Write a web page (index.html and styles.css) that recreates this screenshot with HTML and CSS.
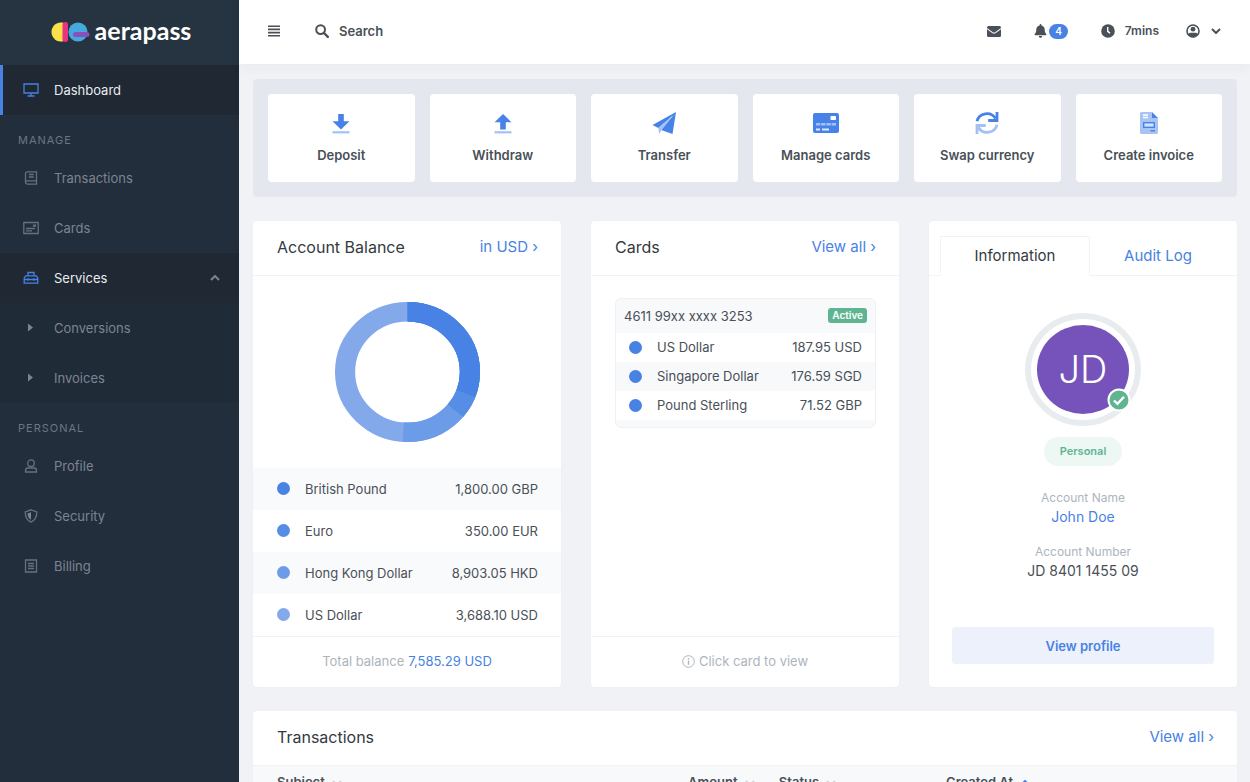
FILE: index.html
```html
<!DOCTYPE html>
<html lang="en">
<head>
  <meta charset="utf-8">
  <meta name="viewport" content="width=device-width, initial-scale=1.0">
  <title>Dashboard - aerapass</title>
  <link rel="stylesheet" href="styles.css">
</head>

<body>
  <div class="app">
    <aside class="sidebar">
      <a class="brand" href="#">
        <svg class="brand-mark" width="42" height="20" viewBox="0 0 42 20">
          <path d="M15 .6A9.6 9.6 0 1 0 15 19.4z" fill="#fbdf4b"/>
          <circle cx="30" cy="10" r="9.600" fill="#45a9e0"/>
          <rect x="14.500" y="0" width="5.500" height="20" rx="2.700" fill="#e8337f"/>
          <rect x="25" y="10" width="16.500" height="5" rx="2.500" fill="#8a4fb8"/>
        </svg>
        <span>aerapass</span>
      </a>
      <nav class="menu">
        <a class="menu-item current" href="#">
          <svg class="menu-icon" width="16" height="14" viewBox="0 0 16 14"><path d="M1 1h14v9H1zM8 10v3M4.500 13h7"/></svg>
          <span>Dashboard</span>
        </a>

        <h2 class="menu-title">Manage</h2>
        <a class="menu-item" href="#">
          <svg class="menu-icon" width="16" height="14" viewBox="0 0 16 14"><path d="M4.500.8h9v12.400h-9a2 2 0 0 1-2-2V2.800a2 2 0 0 1 2-2zM2.500 11.200c0-1 .8-1.400 2-1.400h9M5.800 3.500h5M5.800 6h5"/></svg>
          <span>Transactions</span>
        </a>
        <a class="menu-item" href="#">
          <svg class="menu-icon" width="16" height="14" viewBox="0 0 16 14"><path d="M.8 1.500h14.400v11H.8zM10.500 4.200h2v1h-2zM3 7.500h9M3 9.800h6"/></svg>
          <span>Cards</span>
        </a>
        <a class="menu-item open" href="#">
          <svg class="menu-icon" width="16" height="14" viewBox="0 0 16 14"><path d="M1.200 12.200v-5l1.500-2.400h10.600l1.500 2.400v5zM5 4.800V1.500h6v3.300M1.200 8.500h13.600M5 7.300v2.400M11 7.300v2.400"/></svg>
          <span>Services</span>
          <svg class="menu-caret" width="10" height="6" viewBox="0 0 10 6"><path d="M1 5l4-4 4 4"/></svg>
        </a>
        <div class="submenu">
          <a class="menu-item" href="#">
            <svg class="menu-icon menu-arrow" width="16" height="14" viewBox="0 0 16 14"><path d="M5 2.500v8L10 6.500z"/></svg>
            <span>Conversions</span>
          </a>
          <a class="menu-item" href="#">
            <svg class="menu-icon menu-arrow" width="16" height="14" viewBox="0 0 16 14"><path d="M5 2.500v8L10 6.500z"/></svg>
            <span>Invoices</span>
          </a>
        </div>

        <h2 class="menu-title">Personal</h2>
        <a class="menu-item" href="#">
          <svg class="menu-icon" width="16" height="14" viewBox="0 0 16 14"><circle cx="8" cy="4.200" r="3.300"/><path d="M2.500 13v-1.600a2.400 2.400 0 0 1 2.400-2.400h6.200a2.400 2.400 0 0 1 2.400 2.400V13z"/></svg>
          <span>Profile</span>
        </a>
        <a class="menu-item" href="#">
          <svg class="menu-icon" width="16" height="14" viewBox="0 0 16 14"><path d="M8 .8l5.800 2.100c0 4.800-2 8.300-5.800 10.300C4.200 11.200 2.200 7.700 2.200 2.900z"/><path class="solid" d="M8 3.200v7.600C5.800 9.500 4.700 7.300 4.500 4.500z"/></svg>
          <span>Security</span>
        </a>
        <a class="menu-item" href="#">
          <svg class="menu-icon" width="16" height="14" viewBox="0 0 16 14"><path d="M2.500 1h11v12h-11zM5 4.500h6M5 7h6M5 9.500h6"/></svg>
          <span>Billing</span>
        </a>
      </nav>
    </aside>

    <div class="page">
      <header class="topbar">
        <button class="icon-button" aria-label="Toggle menu">
          <svg width="14" height="12" viewBox="0 0 14 12"><path d="M1 1.200h12M1 4.400h12M1 7.600h12M1 10.800h12" stroke="currentColor" stroke-width="1.600"/></svg>
        </button>
        <label class="search">
          <svg width="14" height="14" viewBox="0 0 14 14" fill="none" stroke="currentColor"><circle cx="5.600" cy="5.600" r="4.400" stroke-width="2"/><path d="M9 9l3.800 3.800" stroke-width="2.400" stroke-linecap="round"/></svg>
          <input type="text" placeholder="Search" aria-label="Search">
        </label>
        <div class="topbar-right">
          <button class="icon-button" aria-label="Messages">
            <svg width="14" height="11" viewBox="0 0 14 11"><rect width="14" height="11" rx="1.500" fill="currentColor"/><path d="M0 2.600l5.500 4q1.500 1 3 0l5.500-4" fill="none" stroke="#fff" stroke-width="1.100"/></svg>
          </button>
          <button class="icon-button notify" aria-label="Notifications">
            <svg width="13" height="14" viewBox="0 0 13 14" fill="currentColor"><path d="M6.500 0c.6 0 .9.400.9.900v.5c2 .4 3.300 2 3.300 4 0 2.600.7 3.500 1.500 4.300.5.600.2 1.500-.6 1.500H1.400c-.8 0-1.100-.9-.6-1.500.8-.8 1.500-1.700 1.500-4.300 0-2 1.300-3.600 3.300-4V.9c0-.5.300-.9.900-.9zM4.800 12h3.400c0 1.100-.7 1.800-1.700 1.800s-1.700-.7-1.700-1.800z"/></svg>
            <span class="count">4</span>
          </button>
          <button class="icon-button timer">
            <svg width="14" height="14" viewBox="0 0 14 14"><circle cx="7" cy="7" r="6.800" fill="currentColor"/><path d="M6.700 3v4.300l2.300 1.800" fill="none" stroke="#fff" stroke-width="1.400"/></svg>
            7mins
          </button>
          <button class="icon-button account" aria-label="Account">
            <svg width="14" height="14" viewBox="0 0 14 14"><circle cx="7" cy="7" r="6" fill="none" stroke="currentColor" stroke-width="1.600"/><circle cx="7" cy="5.200" r="2.400" fill="currentColor"/><path d="M2 10.500C2.600 9 4 8.700 5 8.700h4c1 0 2.400.3 3 1.800-1.200 1.900-3 2.800-5 2.800s-3.800-.9-5-2.800z" fill="currentColor"/></svg>
            <svg width="10" height="6" viewBox="0 0 10 6"><path d="M1 1l4 4 4-4" fill="none" stroke="currentColor" stroke-width="2"/></svg>
          </button>
        </div>
      </header>

      <main class="content">
        <section class="actions">
          <a class="action" href="#">
            <svg width="26" height="24" viewBox="0 0 26 24"><path d="M10.200 3h5.600v7.200H21.500L13 18.500 4.500 10.200h5.700z" fill="#4782e8"/><path d="M4.500 20.200h17v2.200h-17z" fill="#a3c1f5"/></svg>
            Deposit
          </a>
          <a class="action" href="#">
            <svg width="26" height="24" viewBox="0 0 26 24"><path d="M10.200 18.500h5.600v-7.200H21.500L13 3 4.500 11.300h5.700z" fill="#4782e8"/><path d="M4.500 20.200h17v2.200h-17z" fill="#a3c1f5"/></svg>
            Withdraw
          </a>
          <a class="action" href="#">
            <svg width="26" height="24" viewBox="0 0 26 24"><path d="M25 1L1.500 14l5.800 3L22.500 4 10.200 19l11.300 4z" fill="#4782e8"/><path d="M7.300 17L22.500 4 10.500 19 8.200 23z" fill="#a3c1f5"/></svg>
            Transfer
          </a>
          <a class="action" href="#">
            <svg width="26" height="24" viewBox="0 0 26 24"><rect y="2" width="26" height="20" rx="2" fill="#4782e8"/><rect x="17.500" y="5" width="5.500" height="4" rx=".8" fill="#fff"/><path d="M3 13.300h20" stroke="#a3c1f5" stroke-width="2.600" stroke-dasharray="4.400 .8"/><path d="M3 18.500h4M9 18.500h7" stroke="#dbe7fc" stroke-width="1.800"/></svg>
            Manage cards
          </a>
          <a class="action" href="#">
            <svg width="26" height="24" viewBox="0 0 26 24" fill="none" stroke-width="2.800"><path d="M3 10.200A10 9.500 0 0 1 21.500 7.500M23 1v8.500h-8.800" stroke="#4782e8"/><path d="M23 13.800A10 9.500 0 0 1 4.500 16.500M3 23v-8.500h8.800" stroke="#a3c1f5"/></svg>
            Swap currency
          </a>
          <a class="action" href="#">
            <svg width="26" height="24" viewBox="0 0 26 24"><path d="M5.500 1H16v6h6v14.500a1.500 1.500 0 0 1-1.500 1.500h-15A1.500 1.500 0 0 1 4 21.500v-19A1.500 1.500 0 0 1 5.500 1z" fill="#a8c4f4"/><path d="M16 1l6 6h-6z" fill="#4782e8"/><path d="M7 4h5M7 6.500h5" stroke="#fff" stroke-width="1.400"/><rect x="7.700" y="11.700" width="10.600" height="4.600" fill="#d3e1fb" stroke="#4782e8" stroke-width="1.400"/><path d="M14.500 19.800h4.500" stroke="#4782e8" stroke-width="1.400"/></svg>
            Create invoice
          </a>
        </section>

        <section class="panels">
          <article class="panel">
            <header class="panel-head">
              <h3>Account Balance</h3>
              <a href="#">in USD ›</a>
            </header>
            <div class="chart">
              <svg width="145" height="140" viewBox="0 0 144 144" preserveAspectRatio="none">
                <g transform="rotate(-90 72 72)" fill="none" stroke-width="20">
                  <circle cx="72" cy="72" r="62" pathLength="1000" stroke="#83a9ea"/>
                  <circle cx="72" cy="72" r="62" pathLength="1000" stroke="#6c9ce8" stroke-dasharray="511 489"/>
                  <circle cx="72" cy="72" r="62" pathLength="1000" stroke="#568de5" stroke-dasharray="361 639"/>
                  <circle cx="72" cy="72" r="62" pathLength="1000" stroke="#4782e4" stroke-dasharray="308 692"/>
                </g>
              </svg>
            </div>
            <table class="balances">
              <tr><td><i class="dot gbp"></i></td><td>British Pound</td><td>1,800.00 GBP</td></tr>
              <tr><td><i class="dot eur"></i></td><td>Euro</td><td>350.00 EUR</td></tr>
              <tr><td><i class="dot hkd"></i></td><td>Hong Kong Dollar</td><td>8,903.05 HKD</td></tr>
              <tr><td><i class="dot usd"></i></td><td>US Dollar</td><td>3,688.10 USD</td></tr>
            </table>
            <footer class="panel-foot">Total balance <a href="#">7,585.29 USD</a></footer>
          </article>

          <article class="panel">
            <header class="panel-head">
              <h3>Cards</h3>
              <a href="#">View all ›</a>
            </header>
            <div class="panel-body">
              <div class="bank-card">
                <div class="bank-card-head">
                  <span>4611 99xx xxxx 3253</span>
                  <span class="tag">Active</span>
                </div>
                <table>
                  <tr><td><i class="dot"></i></td><td>US Dollar</td><td>187.95 USD</td></tr>
                  <tr><td><i class="dot"></i></td><td>Singapore Dollar</td><td>176.59 SGD</td></tr>
                  <tr><td><i class="dot"></i></td><td>Pound Sterling</td><td>71.52 GBP</td></tr>
                </table>
              </div>
            </div>
            <footer class="panel-foot">
              <svg width="13" height="13" viewBox="0 0 13 13" fill="none" stroke="currentColor"><circle cx="6.500" cy="6.500" r="5.800"/><path d="M6.500 5.500v4.300M6.500 3v1.400" stroke-width="1.400"/></svg>
              Click card to view
            </footer>
          </article>

          <article class="panel">
            <div class="tabs" role="tablist">
              <button class="tab active" role="tab" aria-selected="true">Information</button>
              <button class="tab" role="tab" aria-selected="false">Audit Log</button>
            </div>
            <div class="profile">
              <div class="avatar">
                <span class="initials">JD</span>
                <svg class="verified" width="24" height="24" viewBox="0 0 24 24"><circle cx="12" cy="12" r="10.500" fill="#5fb592" stroke="#fff" stroke-width="2"/><path d="M7 12.500l3.500 3.300 6.500-7" fill="none" stroke="#fff" stroke-width="2.400"/></svg>
              </div>
              <span class="pill">Personal</span>
              <dl>
                <dt>Account Name</dt>
                <dd><a href="#">John Doe</a></dd>
                <dt>Account Number</dt>
                <dd>JD 8401 1455 09</dd>
              </dl>
              <button class="view-profile">View profile</button>
            </div>
          </article>
        </section>

        <section class="panel">
          <header class="panel-head">
            <h3>Transactions</h3>
            <a href="#">View all ›</a>
          </header>
          <table class="transactions">
            <thead>
              <tr>
                <th class="subject">Subject <svg width="10" height="6" viewBox="0 0 10 6"><path d="M1 1l4 4 4-4"/></svg></th>
                <th class="amount">Amount <svg width="10" height="6" viewBox="0 0 10 6"><path d="M1 1l4 4 4-4"/></svg></th>
                <th class="status">Status <svg width="10" height="6" viewBox="0 0 10 6"><path d="M1 1l4 4 4-4"/></svg></th>
                <th>Created At <svg class="sorted" width="10" height="6" viewBox="0 0 10 6"><path d="M1 5l4-4 4 4"/></svg></th>
              </tr>
            </thead>
          </table>
        </section>
      </main>
    </div>
  </div>
</body>
</html>
```
FILE: styles.css
```css
* {
  box-sizing: border-box;
}
body {
  margin: 0;
  background-color: #f0f2f6;
  color: #495057;
  font-family: Inter, Roboto, sans-serif;
  font-size: 13px;
  line-height: 20px;
}
a {
  color: #4782e4;
  text-decoration: none;
}
button {
  font: inherit;
  color: inherit;
  border: 0;
  background: none;
  padding: 0;
  cursor: pointer;
}
table {
  width: 100%;
  border-collapse: collapse;
}
.app {
  display: flex;
  height: 100vh;
  overflow: hidden;
}

/* sidebar */
.sidebar {
  flex: 0 0 239px;
  background-color: #222e3c;
}
.brand {
  display: flex;
  align-items: center;
  justify-content: center;
  gap: 5px;
  height: 65px;
  padding-bottom: 2px;
  background-color: #263442;
  color: #fff;
  font-family: Lato, sans-serif;
  font-size: 25px;
  font-weight: bold;
}
.brand-mark {
  flex: none;
}
.brand span {
  padding-bottom: 4px;
}
.menu-item {
  display: flex;
  align-items: center;
  height: 50px;
  padding: 0 19px 1px 23px;
  color: #7b8592;
}
.menu-icon {
  margin-right: 15px;
  fill: none;
  stroke: #657180;
  stroke-width: 1.3;
}
.menu-icon .solid,
.menu-arrow {
  fill: #7b8592;
  stroke: none;
}
.menu-item.current,
.menu-item.open {
  background-color: #1f2833;
  color: #e9ecef;
}
.menu-item.current {
  border-left: 3px solid #4782e4;
  padding-left: 20px;
}
.current .menu-icon,
.open .menu-icon {
  stroke: #4782e4;
}
.menu-caret {
  margin-left: auto;
  fill: none;
  stroke: #7b8592;
  stroke-width: 2;
}
.submenu {
  background-color: #202b38;
}
.menu-title {
  height: 38px;
  margin: 0;
  padding: 15px 18px 0;
  color: #6b7684;
  font-size: 11px;
  font-weight: normal;
  letter-spacing: 1px;
  text-transform: uppercase;
}

/* top bar */
.page {
  flex: 1;
  min-width: 0;
}
.topbar {
  position: relative;
  display: flex;
  align-items: center;
  height: 64px;
  padding: 0 29px 2px 28px;
  background-color: #fff;
  box-shadow: 0 4px 12px rgba(31, 45, 61, 0.04);
  color: #495057;
  font-weight: 600;
}
.icon-button {
  display: flex;
  align-items: center;
}
.search {
  display: flex;
  align-items: center;
  gap: 10px;
  margin-left: 34px;
}
.search input {
  width: 200px;
  border: 0;
  padding: 0;
  outline: 0;
  background: none;
  font: inherit;
  color: inherit;
}
.search input::placeholder {
  color: #495057;
  opacity: 1;
}
.topbar-right {
  display: flex;
  align-items: center;
  gap: 33px;
  margin-left: auto;
}
.notify {
  gap: 2px;
}
.count {
  padding: 0 6px;
  border-radius: 8px;
  background-color: #4782e4;
  color: #fff;
  font-size: 10px;
  line-height: 15px;
}
.timer {
  gap: 10px;
  margin-right: -6px;
  font-size: 12px;
}
.account {
  gap: 11px;
}

/* content */
.content {
  display: grid;
  gap: 24px;
  padding: 15px 13px 0 14px;
}
.actions {
  display: grid;
  grid-template-columns: repeat(6, 1fr);
  gap: 15px;
  padding: 15px;
  border-radius: 4px;
  background-color: #e4e8ee;
}
.action {
  display: flex;
  flex-direction: column;
  align-items: center;
  justify-content: center;
  gap: 10px;
  height: 88px;
  border-radius: 4px;
  background-color: #fff;
  color: #495057;
  font-weight: 600;
}
.panels {
  display: grid;
  grid-template-columns: repeat(3, 1fr);
  gap: 30px;
}
.panel {
  display: flex;
  flex-direction: column;
  border-radius: 4px;
  background-color: #fff;
  box-shadow: 0 0 2px rgba(31, 45, 61, 0.04);
}
.panels .panel {
  min-height: 466px;
}
.panel-head {
  display: flex;
  align-items: center;
  justify-content: space-between;
  height: 55px;
  padding: 0 23px 2px 24px;
  border-bottom: 1px solid #f1f3f6;
}
.panel-head h3 {
  margin: 0;
  color: #343a40;
  font-size: 16px;
  font-weight: normal;
}
.panel-head a {
  font-size: 15px;
}
.panel-body {
  flex: 1;
  padding: 22px 23px 22px 24px;
}
.panel-foot {
  display: flex;
  align-items: center;
  justify-content: center;
  gap: 4px;
  height: 51px;
  padding-bottom: 2px;
  border-top: 1px solid #f1f3f6;
  color: #adb5bd;
}
.chart {
  flex: 1;
  display: flex;
  align-items: center;
  justify-content: center;
}
.dot {
  display: block;
  width: 13px;
  height: 13px;
  border-radius: 50%;
  background-color: #4782e4;
}
.dot.eur {
  background-color: #568de5;
}
.dot.hkd {
  background-color: #6c9ce8;
}
.dot.usd {
  background-color: #83a9ea;
}
.panels td {
  padding: 0 0 1px;
}
.panels td:first-child {
  width: 52px;
}
.panels td:last-child {
  text-align: right;
}
.balances tr {
  height: 42px;
}
.balances tr:nth-child(odd) {
  background-color: #f9fafc;
}
.balances td:first-child {
  padding-left: 24px;
}
.balances td:last-child {
  padding-right: 23px;
}
.bank-card {
  padding-bottom: 7px;
  border: 1px solid #eff1f5;
  border-radius: 6px;
  background-color: #f8f9fb;
  overflow: hidden;
}
.bank-card-head {
  display: flex;
  align-items: center;
  justify-content: space-between;
  height: 34px;
  padding: 0 8px 1px;
}
.tag {
  padding: 0 4px;
  border-radius: 3px;
  background-color: #5fb592;
  color: #fff;
  font-size: 10px;
  font-weight: 600;
  line-height: 15px;
}
.bank-card tr {
  height: 29px;
}
.bank-card tr:nth-child(odd) {
  background-color: #fff;
}
.bank-card td:first-child {
  width: 41px;
  padding-left: 13px;
}
.bank-card td:last-child {
  padding-right: 13px;
}

/* profile panel */
.tabs {
  display: flex;
  align-items: flex-end;
  height: 55px;
  padding: 0 11px;
  border-bottom: 1px solid #f1f3f6;
}
.tab {
  flex: 1;
  height: 40px;
  margin-bottom: -1px;
  border: 1px solid transparent;
  color: #4782e4;
  font-size: 15px;
}
.tab.active {
  flex: 0 0 150px;
  border-color: #f1f3f6;
  border-bottom-color: #fff;
  background-color: #fff;
  color: #343a40;
}
.profile {
  flex: 1;
  display: flex;
  flex-direction: column;
  align-items: center;
  padding: 37px 23px 23px;
}
.avatar {
  position: relative;
  width: 116px;
  height: 113px;
  padding: 6px;
  border: 6px solid #e9ecef;
  border-radius: 50%;
}
.initials {
  display: flex;
  align-items: center;
  justify-content: center;
  height: 100%;
  padding-bottom: 2px;
  border-radius: 50%;
  background-color: #7553bb;
  color: #fff;
  font-size: 38px;
  font-weight: 300;
}
.verified {
  position: absolute;
  right: 4px;
  bottom: 8px;
}
.pill {
  margin-top: 11px;
  padding: 0 16px;
  border-radius: 15px;
  background-color: #edf7f3;
  color: #5fb592;
  font-size: 11px;
  font-weight: 600;
  line-height: 29px;
}
.profile dl {
  margin: 23px 0 0;
  text-align: center;
}
.profile dt {
  color: #adb5bd;
  font-size: 12px;
  line-height: 18px;
}
.profile dd {
  margin: 0 0 16px;
  font-size: 14px;
}
.view-profile {
  align-self: stretch;
  height: 37px;
  margin-top: auto;
  border-radius: 3px;
  background-color: #edf1fc;
  color: #4782e4;
  font-weight: 600;
}

/* transactions */
.transactions {
  background-color: #f7f9fb;
}
.transactions th {
  padding: 6px 0 6px 24px;
  text-align: left;
  font-weight: 600;
}
.transactions .subject {
  width: 36%;
}
.transactions .amount {
  width: 15%;
  padding-left: 0;
  text-align: right;
}
.transactions .status {
  width: 17%;
}
.transactions svg {
  margin-left: 4px;
  vertical-align: middle;
  fill: none;
  stroke: #ced4da;
  stroke-width: 2;
}
.transactions .sorted {
  stroke: #4782e4;
}
```
